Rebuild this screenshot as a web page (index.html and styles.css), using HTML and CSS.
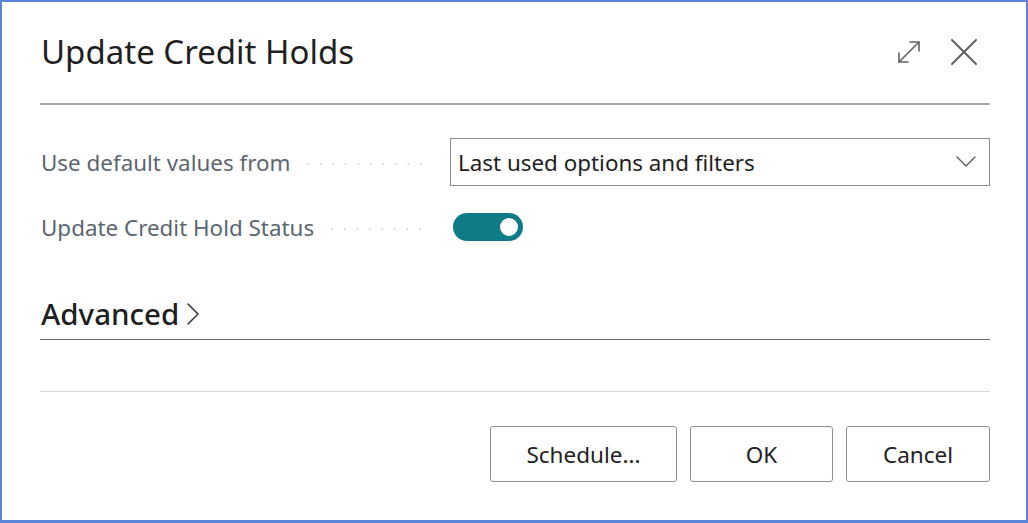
FILE: index.html
```html
<!DOCTYPE html>
<html>
<head>
<meta charset="utf-8">
<link rel="stylesheet" href="styles.css">
</head>
<body>
<div class="frame">
  <header class="head">
    <h1 class="title">Update Credit Holds</h1>
    <div class="head-icons">
      <svg class="ico-expand" width="28" height="28" viewBox="0 0 28 28" fill="none" stroke="#616161" stroke-width="1.6" stroke-linecap="round" stroke-linejoin="round">
        <path d="M4 24 L24 4"/>
        <path d="M15 4 H24 V13"/>
        <path d="M4 15 V24 H13"/>
      </svg>
      <svg class="ico-close" width="30" height="30" viewBox="0 0 30 30" fill="none" stroke="#5f5f5f" stroke-width="2" stroke-linecap="round">
        <path d="M3 3 L27 27"/>
        <path d="M27 3 L3 27"/>
      </svg>
    </div>
  </header>
  <div class="head-rule"></div>

  <div class="fields">
    <div class="field">
      <div class="label"><span>Use default values from</span><span class="dots"></span></div>
      <div class="select">
        <span>Last used options and filters</span>
        <svg width="20" height="12" viewBox="0 0 20 12" fill="none" stroke="#5a5a5a" stroke-width="1.4" stroke-linecap="round" stroke-linejoin="round"><path d="M1 1 L10 10 L19 1"/></svg>
      </div>
    </div>
    <div class="field field-toggle">
      <div class="label"><span>Update Credit Hold Status</span><span class="dots"></span></div>
      <div class="toggle"><span class="knob"></span></div>
    </div>
  </div>

  <div class="advanced">
    <span class="adv-text">Advanced</span>
    <svg width="14" height="24" viewBox="0 0 14 24" fill="none" stroke="#333" stroke-width="1.5" stroke-linecap="round" stroke-linejoin="round"><path d="M2 2 L12 12 L2 22"/></svg>
  </div>

  <div class="foot-rule"></div>

  <div class="buttons">
    <button class="btn btn-schedule">Schedule...</button>
    <button class="btn btn-ok">OK</button>
    <button class="btn btn-cancel">Cancel</button>
  </div>
</div>
</body>
</html>
```

FILE: styles.css
```css
html, body {
  margin: 0;
  padding: 0;
  background: #ffffff;
}
body {
  font-family: "Noto Sans", "Open Sans", sans-serif;
  color: #212121;
}
.frame {
  box-sizing: border-box;
  width: 1028px;
  height: 523px;
  border: 2px solid #5b84d6;
  border-bottom-width: 3px;
  background: #ffffff;
  padding: 0 36px 0 38px;
  display: flex;
  flex-direction: column;
}
.head {
  display: flex;
  align-items: center;
  justify-content: space-between;
  height: 101px;
}
.title {
  margin: 0;
  font-size: 33px;
  font-weight: 400;
  color: #1f1f1f;
  padding-left: 1px;
  letter-spacing: 0;
  margin-top: -2px;
}
.head-icons {
  display: flex;
  align-items: center;
  gap: 26px;
  padding-right: 11px;
  margin-top: -2px;
}
.head-rule {
  height: 2px;
  background: #a6a6ae;
}
.fields {
  display: flex;
  flex-direction: column;
  padding-top: 33px;
  gap: 26px;
}
.field {
  display: flex;
  align-items: center;
  height: 48px;
}
.label {
  width: 409px;
  display: flex;
  align-items: center;
  font-size: 22.4px;
  color: #5b6670;
  padding-left: 1px;
}
.dots {
  flex: 1;
  height: 2px;
  margin: 4px 20px 0 12px;
  background-image: radial-gradient(circle, #c4c8cc 0.9px, transparent 1.1px);
  background-size: 12.5px 2px;
  background-repeat: repeat-x;
}
.select {
  flex: 1;
  box-sizing: border-box;
  height: 48px;
  border: 1px solid #8c8c8c;
  display: flex;
  align-items: center;
  justify-content: space-between;
  padding: 0 13px 0 7px;
  font-size: 22.4px;
  color: #222;
}
.field-toggle {
  height: 30px;
}
.toggle {
  margin-left: 3px;
  width: 70px;
  height: 28px;
  border-radius: 14px;
  background: #0e7c86;
  display: flex;
  align-items: center;
  justify-content: flex-end;
  padding-right: 5px;
  box-sizing: border-box;
}
.knob {
  width: 18px;
  height: 18px;
  border-radius: 50%;
  background: #ffffff;
}
.advanced {
  margin-top: 50px;
  height: 48px;
  box-sizing: border-box;
  border-bottom: 1.5px solid #6b6b6b;
  display: flex;
  align-items: center;
  gap: 7px;
  padding-left: 1px;
  padding-bottom: 4px;
}
.adv-text {
  font-size: 29.5px;
  font-weight: 500;
  color: #1f1f1f;
}
.foot-rule {
  margin-top: 51px;
  height: 1px;
  background: #d8d8d8;
}
.buttons {
  display: flex;
  justify-content: flex-end;
  gap: 13px;
  margin-top: 34px;
}
.btn {
  height: 56px;
  box-sizing: border-box;
  border: 1px solid #8f8f8f;
  border-radius: 3px;
  background: #ffffff;
  font-family: "Noto Sans", "Open Sans", sans-serif;
  font-size: 22.5px;
  color: #222;
  padding: 0;
}
.btn-schedule { width: 187px; }
.btn-ok { width: 143px; }
.btn-cancel { width: 144px; }
```
